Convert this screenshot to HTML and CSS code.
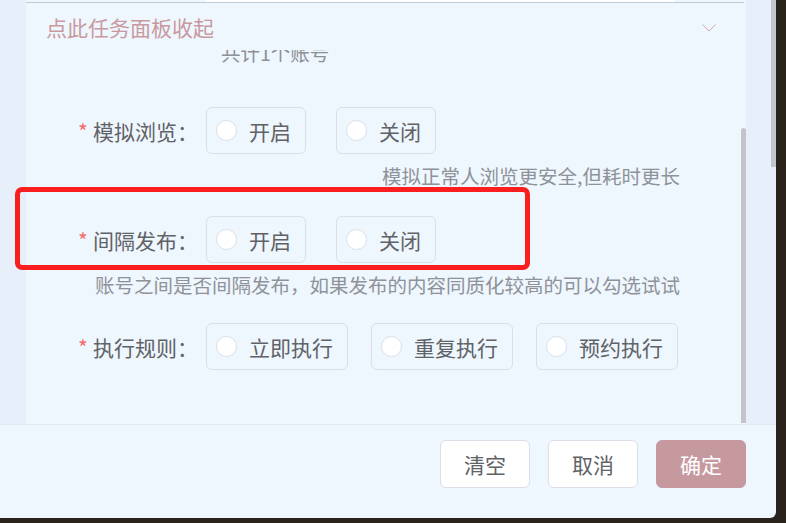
FILE: index.html
```html
<!DOCTYPE html>
<html lang="zh-CN">
<head>
<meta charset="utf-8">
<title>任务面板</title>
<link rel="stylesheet" href="styles.css">
</head>
<body>
<div class="dialog">
  <div class="body">
    <div class="panel">
      <div class="peek"><div class="peek-input"></div></div>
      <div class="head">
        <span class="title">点此任务面板收起</span>
        <svg class="chev" width="14" height="8" viewBox="0 0 14 8"><polyline points="0.5,0.5 7,7 13.5,0.5" fill="none" stroke="#d3a7ab" stroke-width="1"/></svg>
      </div>
      <div class="scroll">
        <div class="count">共计1个账号</div>

        <div class="row row-first">
          <div class="label"><span class="star">*</span>模拟浏览：</div>
          <div class="group">
            <label class="radio"><span class="dot"></span><span class="rtext">开启</span></label>
            <label class="radio"><span class="dot"></span><span class="rtext">关闭</span></label>
          </div>
        </div>
        <div class="hint">模拟正常人浏览更安全,但耗时更长</div>

        <div class="row row-after-hint">
          <div class="label"><span class="star">*</span>间隔发布：</div>
          <div class="group">
            <label class="radio"><span class="dot"></span><span class="rtext">开启</span></label>
            <label class="radio"><span class="dot"></span><span class="rtext">关闭</span></label>
          </div>
        </div>
        <div class="hint">账号之间是否间隔发布，如果发布的内容同质化较高的可以勾选试试</div>

        <div class="row row-last">
          <div class="label"><span class="star">*</span>执行规则：</div>
          <div class="group group-tight">
            <label class="radio"><span class="dot"></span><span class="rtext">立即执行</span></label>
            <label class="radio"><span class="dot"></span><span class="rtext">重复执行</span></label>
            <label class="radio"><span class="dot"></span><span class="rtext">预约执行</span></label>
          </div>
        </div>
      </div>
      <div class="thumb"></div>
    </div>
  </div>
  <div class="footer">
    <button class="btn">清空</button>
    <button class="btn">取消</button>
    <button class="btn btn-primary">确定</button>
  </div>
  <div class="outer-thumb"></div>
  <div class="mark"></div>
</div>
</body>
</html>
```

FILE: styles.css
```css
html, body {
  margin: 0;
  padding: 0;
}
body {
  background: #2a231b;
  font-family: "Noto Sans CJK SC", "Noto Sans", sans-serif;
  width: 786px;
  height: 523px;
  overflow: hidden;
}
.dialog {
  position: relative;
  width: 776px;
  height: 518px;
  background: #eef6fe;
  border-bottom-right-radius: 6px;
  display: flex;
  flex-direction: column;
  overflow: hidden;
}
.body {
  height: 424px;
  background: #e7f0fa;
  display: flex;
}
.panel {
  position: relative;
  margin-left: 26px;
  width: 720px;
  background: #eef6fe;
  display: flex;
  flex-direction: column;
}
.peek {
  height: 2px;
}
.peek-input {
  margin-left: 180px;
  width: 469px;
  height: 2px;
  background: #ffffff;
}
.head {
  height: 47px;
  border-top: 1px solid #c6c9cf;
  margin-right: 2px;
  display: flex;
  align-items: center;
  justify-content: space-between;
  padding: 0 28px 0 20px;
  background: #eef6fe;
  position: relative;
  z-index: 1;
}
.title {
  font-size: 21px;
  line-height: 30px;
  color: #c9999e;
}
.chev {
  display: block;
  margin-top: 2px;
}
.scroll {
  flex: 1;
  overflow: hidden;
}
.count {
  margin-top: -12px;
  height: 30px;
  line-height: 30px;
  padding-left: 195px;
  font-size: 19.5px;
  color: #8d9096;
}
.row {
  display: flex;
  align-items: center;
  padding-left: 52px;
  height: 47px;
}
.row-first {
  margin-top: 39px;
}
.row-after-hint {
  margin-top: 25px;
}
.row-last {
  margin-top: 23px;
}
.label {
  width: 128px;
  flex: none;
  font-size: 21px;
  line-height: 30px;
  color: #606266;
  white-space: nowrap;
}
.star {
  display: inline-block;
  width: 15px;
  color: #f56c6c;
}
.group {
  display: flex;
  gap: 30px;
}
.group-tight {
  gap: 23px;
}
.radio {
  box-sizing: border-box;
  height: 47px;
  border: 1px solid #dcdfe6;
  border-radius: 6px;
  display: flex;
  align-items: center;
  padding: 0 14px 0 9px;
  gap: 12px;
}
.dot {
  box-sizing: border-box;
  width: 21px;
  height: 21px;
  border: 1px solid #dcdfe6;
  border-radius: 50%;
  background: #ffffff;
  flex: none;
}
.rtext {
  font-size: 21px;
  line-height: 30px;
  color: #606266;
  white-space: nowrap;
}
.hint {
  margin-top: 7px;
  height: 30px;
  line-height: 30px;
  text-align: right;
  padding-right: 66px;
  font-size: 19.5px;
  color: #8f9298;
  white-space: nowrap;
}
.thumb {
  position: absolute;
  right: 0;
  top: 128px;
  bottom: 1px;
  width: 5px;
  background: #c1c4cb;
  border-radius: 3px 3px 0 0;
}
.footer {
  flex: 1;
  border-top: 1px solid #e5e7ee;
  display: flex;
  justify-content: flex-end;
  align-items: flex-start;
  gap: 18px;
  padding: 15px 30px 0 0;
}
.btn {
  box-sizing: border-box;
  width: 90px;
  height: 48px;
  border: 1px solid #dcdfe6;
  border-radius: 6px;
  background: #ffffff;
  color: #606266;
  font-family: "Noto Sans CJK SC", "Noto Sans", sans-serif;
  font-size: 21px;
  padding: 0;
}
.btn-primary {
  background: #c5999e;
  border-color: #c5999e;
  color: #ffffff;
}
.outer-thumb {
  position: absolute;
  right: 0;
  top: 0;
  width: 5px;
  height: 167px;
  background: #c3c6cc;
}
.mark {
  position: absolute;
  left: 15px;
  top: 187px;
  width: 515px;
  height: 83px;
  box-sizing: border-box;
  border: 5px solid #fb1e1e;
  border-radius: 7px;
}
```
